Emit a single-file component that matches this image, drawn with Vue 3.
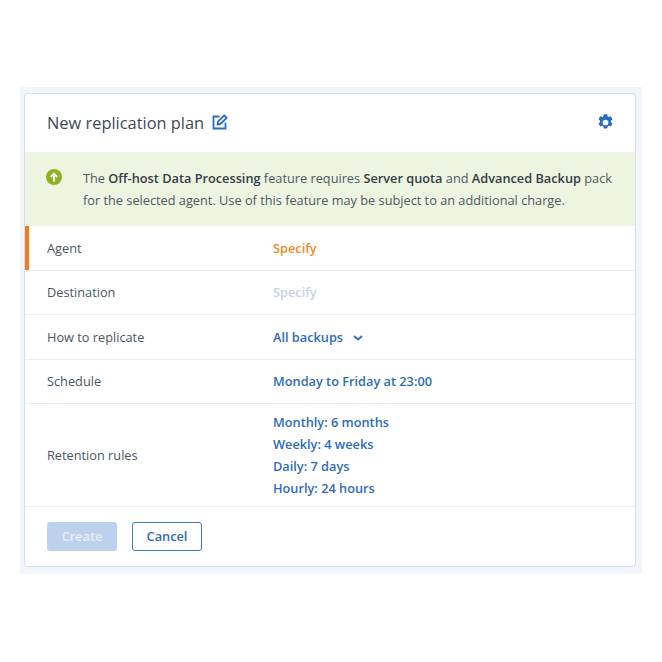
<script setup>
const retention = ['Monthly: 6 months', 'Weekly: 4 weeks', 'Daily: 7 days', 'Hourly: 24 hours']
</script>

<template>
  <div class="page">
    <div class="band">
      <div class="card">
        <header class="head">
          <h1>New replication plan</h1>
          <svg class="edit" width="16" height="16" viewBox="0 0 16 16" fill="none" stroke="#2a6cc0" stroke-width="1.8">
            <path d="M7.5 2.5H1.500v12h12V8.500" />
            <path d="M5.500 10.500l.5-2.800L12.200 1.300l2.500 2.500L8.300 10z" stroke-linejoin="round" />
          </svg>
          <svg class="gear" width="17" height="17" viewBox="0 0 16 16">
            <path fill="#2a6cc0" fill-rule="evenodd" d="M6.400 0.300h3.200l.4 2 1.100.6 1.900-.7 1.600 2.800-1.500 1.300v1.400l1.500 1.300-1.600 2.800-1.900-.7-1.100.6-.4 2H6.400l-.4-2-1.100-.6-1.900.7-1.600-2.800 1.500-1.300V6.300L1.400 5 3 2.200l1.900.7 1.100-.6zM8 5.300a2.700 2.700 0 1 0 0 5.400 2.700 2.700 0 0 0 0-5.400z" />
          </svg>
        </header>
        <div class="banner">
          <svg class="up" width="16" height="16" viewBox="0 0 16 16">
            <circle cx="8" cy="8" r="8" fill="#8fb022" />
            <path d="M8 12.500V5M4.800 8L8 4.800 11.200 8" fill="none" stroke="#fff" stroke-width="2" />
          </svg>
          <p>The <b>Off-host Data Processing</b> feature requires <b>Server quota</b> and <b>Advanced Backup</b> pack for the selected agent. Use of this feature may be subject to an additional charge.</p>
        </div>
        <div class="row active">
          <span class="label">Agent</span>
          <span class="value orange">Specify</span>
        </div>
        <div class="row">
          <span class="label">Destination</span>
          <span class="value faded">Specify</span>
        </div>
        <div class="row">
          <span class="label">How to replicate</span>
          <span class="value">All backups
            <svg class="chev" width="10" height="6" viewBox="0 0 10 6" fill="none" stroke="#2a6cc0" stroke-width="1.800"><path d="M1 1l4 3.500L9 1" /></svg>
          </span>
        </div>
        <div class="row">
          <span class="label">Schedule</span>
          <span class="value">Monday to Friday at 23:00</span>
        </div>
        <div class="row tall">
          <span class="label">Retention rules</span>
          <div class="list">
            <span v-for="r in retention" :key="r" class="value">{{ r }}</span>
          </div>
        </div>
        <footer class="foot">
          <button class="btn primary" disabled>Create</button>
          <button class="btn outline">Cancel</button>
        </footer>
      </div>
    </div>
  </div>
</template>

<style scoped>
.page {
  width: 662px;
  height: 662px;
  padding: 87px 20px 0;
  box-sizing: border-box;
  background: #fff;
  font-family: "Open Sans", sans-serif;
  font-size: 12.75px;
  color: #4a5662;
}
.band {
  width: 622px;
  height: 487px;
  padding: 6px 6px 7px 4px;
  box-sizing: border-box;
  background: #f2f6fc;
}
.card {
  height: 100%;
  box-sizing: border-box;
  background: #fff;
  border: 1px solid #d5dfee;
  border-radius: 4px;
  display: flex;
  flex-direction: column;
  overflow: hidden;
}
.head {
  height: 58px;
  flex: none;
  display: flex;
  align-items: center;
  padding: 0 21px 2px 22px;
  box-sizing: border-box;
}
h1 {
  margin: 0;
  font-size: 16.4px;
  font-weight: 400;
  color: #3f4a55;
}
.edit { margin-left: 8px; }
.gear { margin-left: auto; margin-top: 1px; }
.banner {
  height: 74px;
  flex: none;
  box-sizing: border-box;
  background: #edf4df;
  display: flex;
  padding: 15px 14px 0 21px;
}
.up { flex: none; margin-top: 2px; }
.banner p {
  margin: 0 0 0 21px;
  line-height: 22px;
  color: #4f5a64;
}
.banner b { font-weight: 600; color: #333d47; }
.row {
  height: 44.5px;
  flex: none;
  box-sizing: border-box;
  display: flex;
  align-items: center;
  padding-left: 22px;
  border-bottom: 1px solid #e9eef4;
}
.row.active { box-shadow: inset 4px 0 0 #f07d1e; }
.row.tall { height: 103px; padding-bottom: 1px; }
.label { width: 226px; flex: none; }
.value { font-weight: 600; color: #2f6cb8; }
.orange { color: #ee8a2a; }
.faded { color: #c3d4e8; }
.chev { margin-left: 7px; vertical-align: 1px; }
.list { display: flex; flex-direction: column; line-height: 22px; }
.foot {
  flex: 1;
  display: flex;
  align-items: center;
  gap: 15px;
  padding-left: 22px;
  padding-bottom: 1px;
}
.btn {
  width: 70px;
  height: 29px;
  box-sizing: border-box;
  border-radius: 3px;
  font: 600 12.75px "Open Sans", sans-serif;
  padding: 0;
}
.primary { background: #bcd2ec; border: 0; color: #e4eef8; }
.outline { background: #fff; border: 1px solid #3f7ab8; color: #2f6cb8; }
</style>
